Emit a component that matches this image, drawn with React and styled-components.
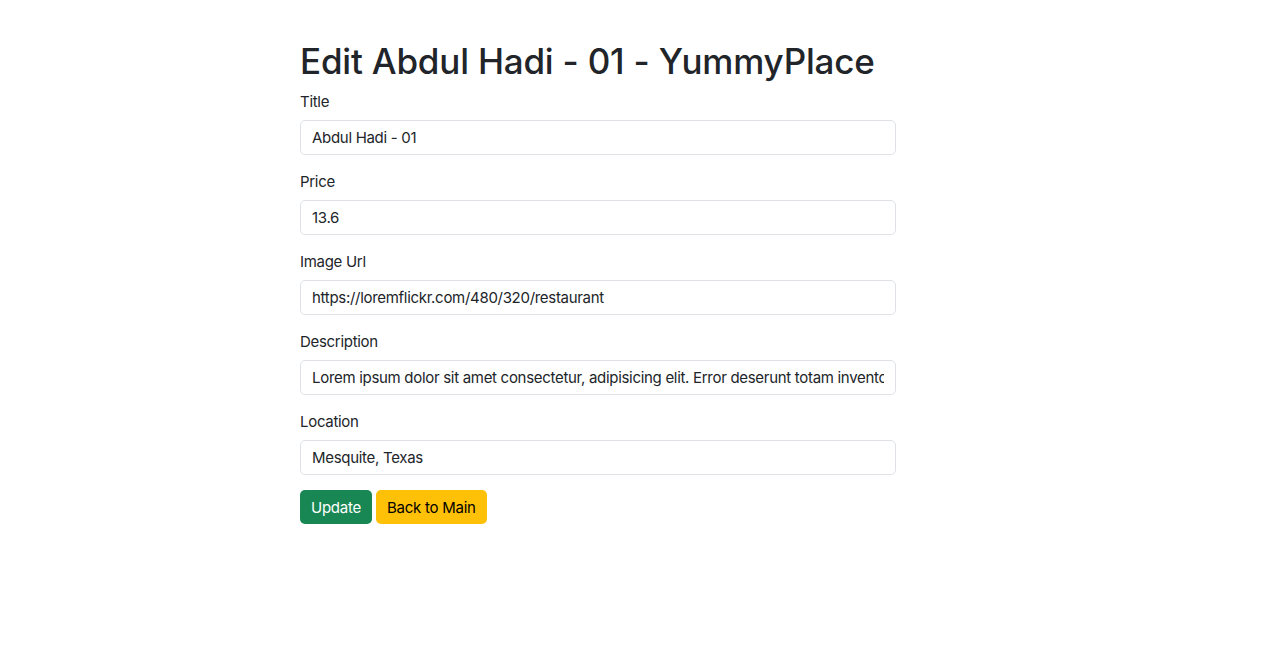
import React from 'react'
import styled, { createGlobalStyle } from 'styled-components'

const GlobalStyle = createGlobalStyle`
  body {
    margin: 0;
    background: #ffffff;
    color: #212529;
    font-family: Inter, "Noto Sans", "Liberation Sans", sans-serif;
  }
`

const Page = styled.div`
  width: 596px;
  margin: 0 auto 0 300px;
  padding-top: 40px;
`

const Heading = styled.h1`
  margin: 0 0 8px;
  font-size: 35px;
  font-weight: 500;
  line-height: 1.2;
  letter-spacing: -0.2px;
`

const Form = styled.form`
  display: flex;
  flex-direction: column;
`

const Field = styled.div`
  display: flex;
  flex-direction: column;
  margin-bottom: 15px;
`

const Label = styled.label`
  padding-top: 1px;
  font-size: 15px;
  line-height: 22px;
  letter-spacing: -0.3px;
  margin-bottom: 7px;
`

const Input = styled.input`
  box-sizing: border-box;
  height: 35px;
  padding: 0 11px;
  font: inherit;
  font-size: 15px;
  letter-spacing: -0.3px;
  color: #212529;
  border: 1px solid #dee2e6;
  border-radius: 5px;
  background: #fff;
  outline: none;
`

const Actions = styled.div`
  display: flex;
  gap: 4px;
`

const Button = styled.button`
  height: 34px;
  padding: 0 11px;
  font: inherit;
  font-size: 15px;
  letter-spacing: -0.25px;
  border: none;
  border-radius: 5px;
  cursor: pointer;
  color: ${p => (p.$variant === 'warning' ? '#000' : '#fff')};
  background: ${p => (p.$variant === 'warning' ? '#ffc107' : '#198754')};
`

const fields = [
  { label: 'Title', value: 'Abdul Hadi - 01' },
  { label: 'Price', value: '13.6' },
  { label: 'Image Url', value: 'https://loremflickr.com/480/320/restaurant' },
  {
    label: 'Description',
    value:
      'Lorem ipsum dolor sit amet consectetur, adipisicing elit. Error deserunt totam inventore quibusdam.',
  },
  { label: 'Location', value: 'Mesquite, Texas' },
]

export default function App() {
  return (
    <>
      <GlobalStyle />
      <Page>
        <Heading>Edit Abdul Hadi - 01 - YummyPlace</Heading>
        <Form onSubmit={e => e.preventDefault()}>
          {fields.map(f => (
            <Field key={f.label}>
              <Label>{f.label}</Label>
              <Input defaultValue={f.value} />
            </Field>
          ))}
          <Actions>
            <Button type="submit">Update</Button>
            <Button type="button" $variant="warning">Back to Main</Button>
          </Actions>
        </Form>
      </Page>
    </>
  )
}
